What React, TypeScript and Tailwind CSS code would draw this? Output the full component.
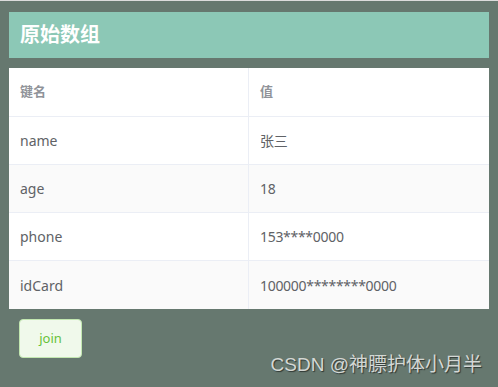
const rows = [
    { key: "name", value: "张三" },
    { key: "age", value: "18" },
    { key: "phone", value: "153****0000" },
    { key: "idCard", value: "100000********0000" },
];

const font = { fontFamily: '"Microsoft YaHei", "Noto Sans", "Noto Sans CJK SC", sans-serif' };

export default function App() {
    return (
        <div
            className="w-[498px] h-[387px] bg-[#66786f] border-t border-[#dcdcdc] relative overflow-hidden"
            style={font}
        >
            <div className="pl-[9px] pr-[9px] pt-[11px]">
                {/* Title bar */}
                <div className="h-[46px] bg-[#8cc8b6] flex items-center px-[11px]">
                    <h1 className="text-[20px] font-bold text-white leading-none">原始数组</h1>
                </div>

                {/* Table */}
                <div className="mt-[10px] bg-white">
                    <div className="grid grid-cols-[240px_240px] h-[49px] border-b border-[#ebeef5] text-[13px] font-bold text-[#909399]">
                        <div className="flex items-center pl-[11px] border-r border-[#ebeef5]">键名</div>
                        <div className="flex items-center pl-[11px]">值</div>
                    </div>
                    {rows.map((row, i) => (
                        <div
                            key={row.key}
                            className={`grid grid-cols-[240px_240px] h-[48px] text-[14px] text-[#606266] ${
                                i < rows.length - 1 ? "border-b border-[#ebeef5]" : ""
                            } ${i % 2 === 1 ? "bg-[#fafafa]" : "bg-white"}`}
                        >
                            <div className="flex items-center pl-[11px] border-r border-[#ebeef5]">{row.key}</div>
                            <div className="flex items-center pl-[11px] tracking-[-0.3px]">{row.value}</div>
                        </div>
                    ))}
                </div>

                {/* Button */}
                <div className="pl-[10px] pt-[10px]">
                    <button className="h-[39px] w-[63px] rounded-[4px] bg-[#f0f9eb] border border-[#c2e7b0] text-[#67c23a] text-[13px] flex items-center justify-center">
                        join
                    </button>
                </div>
            </div>

            {/* Watermark */}
            <div
                className="absolute right-[16px] bottom-[8px] text-[19px] text-[#d4d8d5] [text-shadow:1px_1px_1px_rgba(0,0,0,0.55)]"
                style={{ fontFamily: '"Liberation Sans", "Noto Sans CJK SC", sans-serif' }}
            >
                CSDN @神膘护体小月半
            </div>
        </div>
    );
}
